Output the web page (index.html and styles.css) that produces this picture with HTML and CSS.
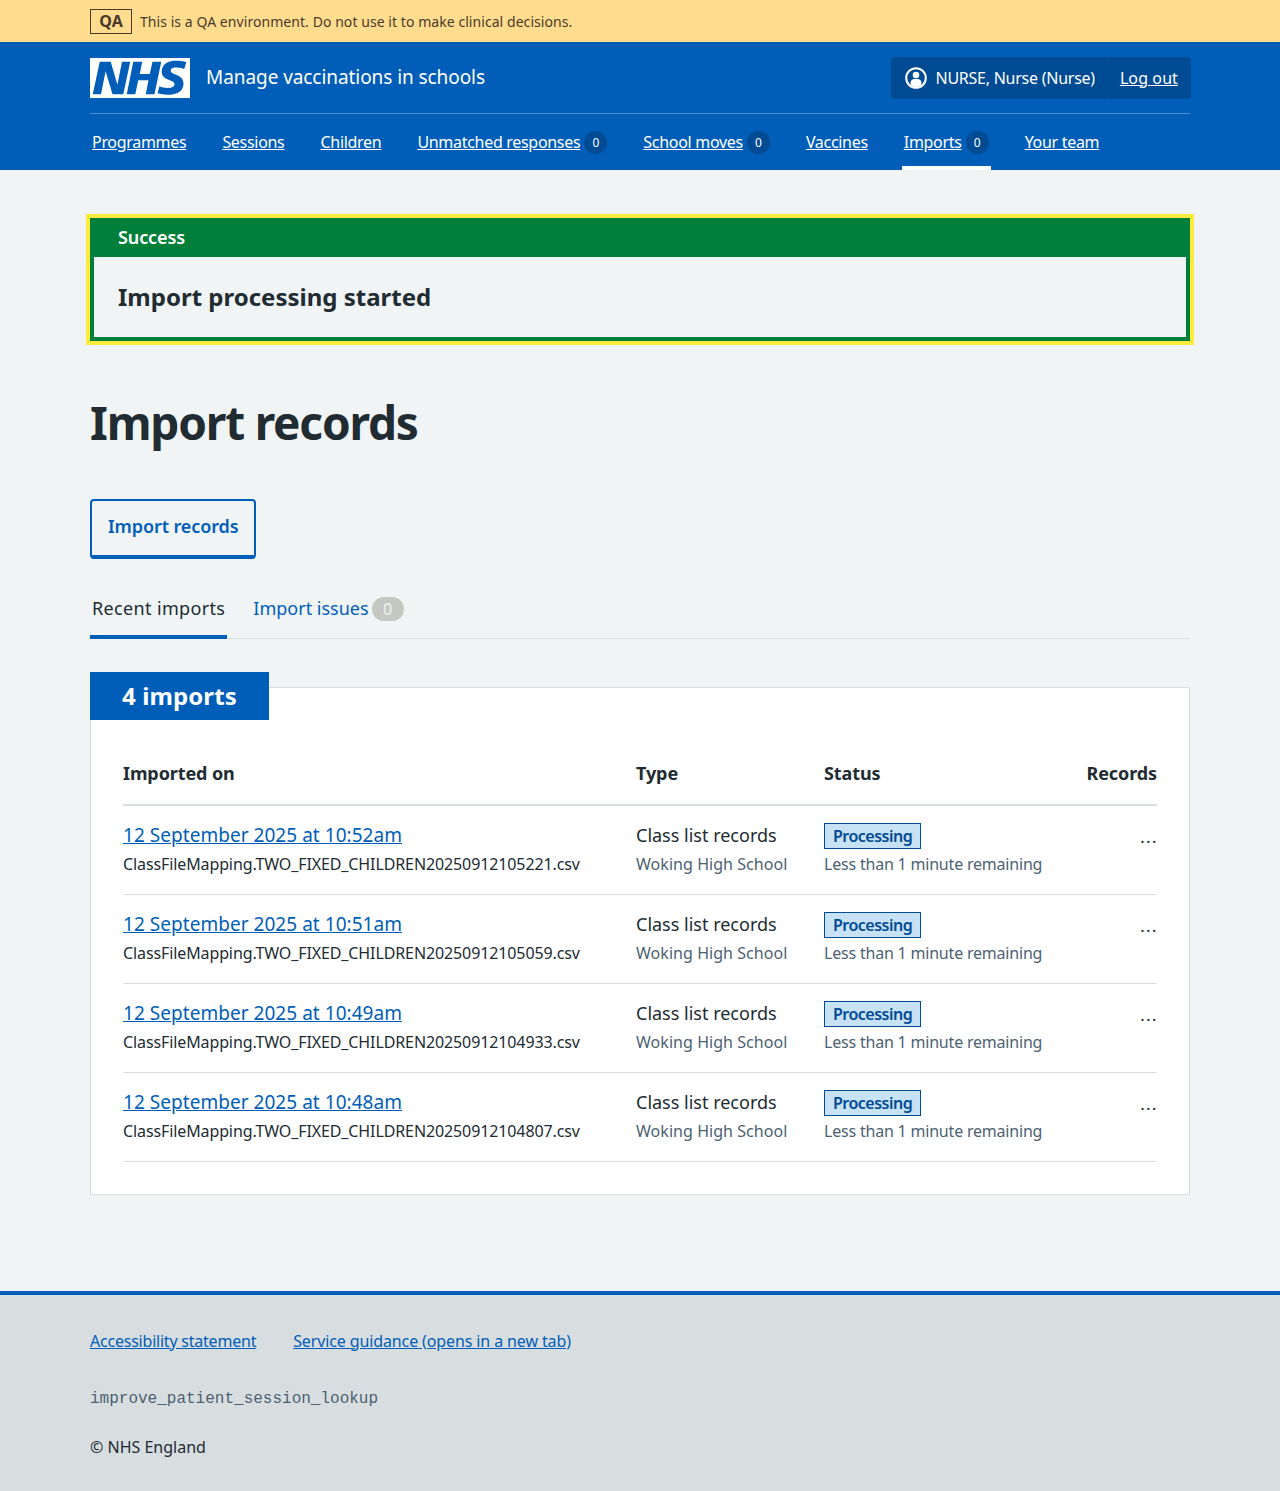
FILE: index.html
```html
<!DOCTYPE html>
<html lang="en">
<head>
    <meta charset="utf-8" />
    <title>Import records</title>
    <link rel="stylesheet" href="styles.css">
</head>
<body>
    <div class="env-bar">
        <div class="wrap env-inner">
            <strong class="env-tag">QA</strong>
            <span>This is a QA environment. Do not use it to make clinical decisions.</span>
        </div>
    </div>

    <header class="header">
        <div class="wrap">
            <div class="header-top">
                <a class="brand" href="#">
                    <svg class="logo" viewBox="0 0 40 16" aria-label="NHS">
                        <path fill="#fff" d="M0 0h40v16H0z"></path>
                        <path fill="#005eb8" d="M3.9 1.5h4.4l2.6 9h.1l1.8-9h3.3l-2.8 13H9l-2.7-9h-.1l-1.8 9H1.1M17.3 1.5h3.6l-1 4.9h4L25 1.5h3.5l-2.7 13h-3.5l1.1-5.6h-4.1l-1.2 5.6h-3.4M37.7 4.4c-.7-.3-1.6-.6-2.9-.6-1.4 0-2.5.2-2.5 1.3 0 1.8 5.1 1.2 5.1 5.1 0 3.6-3.3 4.5-6.4 4.5-1.3 0-2.9-.3-4-.7l.8-2.7c.7.4 2.1.7 3.2.7s2.8-.2 2.8-1.5c0-2.1-5.1-1.3-5.1-5 0-3.4 2.9-4.4 5.8-4.4 1.6 0 3.1.2 4 .6"></path>
                    </svg>
                    <span class="service">Manage vaccinations in schools</span>
                </a>
                <div class="account">
                    <span class="account-user">
                        <svg class="user-icon" viewBox="0 0 22 22">
                            <circle cx="11" cy="11" r="9.8" fill="none" stroke="#fff" stroke-width="2"></circle>
                            <circle cx="11" cy="8" r="3.3" fill="#fff"></circle>
                            <path fill="#fff" d="M5.5 18.2v-2.400c0-2.400 1.900-3.800 3.900-3.800h3.200c2 0 3.900 1.400 3.900 3.800v2.400c-1.500 1.100-3.400 1.800-5.500 1.800s-4-.7-5.500-1.800z"></path>
                        </svg>
                        NURSE, Nurse (Nurse)
                    </span>
                    <a class="account-link" href="#">Log out</a>
                </div>
            </div>
            <nav class="nav">
                <a class="nav-item" href="#"><span class="nav-text">Programmes</span></a>
                <a class="nav-item" href="#"><span class="nav-text">Sessions</span></a>
                <a class="nav-item" href="#"><span class="nav-text">Children</span></a>
                <a class="nav-item" href="#"><span class="nav-text">Unmatched responses</span><span class="count">0</span></a>
                <a class="nav-item" href="#"><span class="nav-text">School moves</span><span class="count">0</span></a>
                <a class="nav-item" href="#"><span class="nav-text">Vaccines</span></a>
                <a class="nav-item nav-item-active" href="#"><span class="nav-text">Imports</span><span class="count">0</span></a>
                <a class="nav-item" href="#"><span class="nav-text">Your team</span></a>
            </nav>
        </div>
    </header>

    <main class="wrap main">
        <div class="banner">
            <div class="banner-title">Success</div>
            <div class="banner-body">Import processing started</div>
        </div>

        <h1 class="page-title">Import records</h1>

        <a class="btn-secondary" href="#">Import records</a>

        <div class="tabs">
            <a class="tab tab-active" href="#">Recent imports</a>
            <a class="tab" href="#">Import issues<span class="tab-count">0</span></a>
        </div>

        <section class="card">
            <h2 class="card-heading">4 imports</h2>
            <table class="table">
                <thead>
                    <tr>
                        <th class="col-date">Imported on</th>
                        <th class="col-type">Type</th>
                        <th class="col-status">Status</th>
                        <th class="col-records">Records</th>
                    </tr>
                </thead>
                <tbody>
                    <tr>
                        <td><a class="row-link" href="#">12 September 2025 at 10:52am</a><div class="file">ClassFileMapping.TWO_FIXED_CHILDREN20250912105221.csv</div></td>
                        <td><div class="type">Class list records</div><div class="muted">Woking High School</div></td>
                        <td><span class="tag">Processing</span><div class="muted">Less than 1 minute remaining</div></td>
                        <td class="records">…</td>
                    </tr>
                    <tr>
                        <td><a class="row-link" href="#">12 September 2025 at 10:51am</a><div class="file">ClassFileMapping.TWO_FIXED_CHILDREN20250912105059.csv</div></td>
                        <td><div class="type">Class list records</div><div class="muted">Woking High School</div></td>
                        <td><span class="tag">Processing</span><div class="muted">Less than 1 minute remaining</div></td>
                        <td class="records">…</td>
                    </tr>
                    <tr>
                        <td><a class="row-link" href="#">12 September 2025 at 10:49am</a><div class="file">ClassFileMapping.TWO_FIXED_CHILDREN20250912104933.csv</div></td>
                        <td><div class="type">Class list records</div><div class="muted">Woking High School</div></td>
                        <td><span class="tag">Processing</span><div class="muted">Less than 1 minute remaining</div></td>
                        <td class="records">…</td>
                    </tr>
                    <tr>
                        <td><a class="row-link" href="#">12 September 2025 at 10:48am</a><div class="file">ClassFileMapping.TWO_FIXED_CHILDREN20250912104807.csv</div></td>
                        <td><div class="type">Class list records</div><div class="muted">Woking High School</div></td>
                        <td><span class="tag">Processing</span><div class="muted">Less than 1 minute remaining</div></td>
                        <td class="records">…</td>
                    </tr>
                </tbody>
            </table>
        </section>
    </main>

    <footer class="footer">
        <div class="wrap">
            <div class="footer-links">
                <a href="#">Accessibility statement</a>
                <a class="footer-guidance" href="#">Service guidance (opens in a new tab)</a>
            </div>
            <code class="branch">improve_patient_session_lookup</code>
            <p class="copyright">© NHS England</p>
        </div>
    </footer>
</body>
</html>
```

FILE: styles.css
```css
* {
    box-sizing: border-box;
}

body {
    margin: 0;
    background-color: #f0f4f5;
    color: #212b32;
    font-family: 'Noto Sans', sans-serif;
    font-size: 16px;
    line-height: 24px;
}

a {
    color: #005eb8;
}

.wrap {
    width: 1100px;
    margin: 0 auto;
}

/* environment bar */
.env-bar {
    height: 42px;
    background-color: #ffdc8e;
    color: #4a3a2a;
    font-size: 14px;
    letter-spacing: 0.06px;
}

.env-inner {
    display: flex;
    align-items: center;
    height: 42px;
    padding-top: 1px;
}

.env-tag {
    width: 42px;
    height: 25px;
    margin-right: 8px;
    border: 1px solid #4a3a2a;
    font-size: 16px;
    line-height: 23px;
    text-align: center;
}

/* header */
.header {
    height: 128px;
    background-color: #005eb8;
    color: #fff;
}

.header a {
    color: #fff;
}

.header-top {
    display: flex;
    justify-content: space-between;
    align-items: center;
    height: 72px;
    border-bottom: 1px solid #4c8ed0;
}

.brand {
    display: flex;
    align-items: center;
    text-decoration: none;
}

.logo {
    display: block;
    width: 100px;
    height: 40px;
}

.service {
    margin-left: 16px;
    padding-bottom: 2px;
    font-size: 19px;
    letter-spacing: -0.07px;
}

.account {
    display: flex;
    height: 42px;
    margin-right: -1px;
    background-color: #004b93;
    border-radius: 4px;
}

.account-user {
    display: flex;
    align-items: center;
    padding: 0 12px 0 14px;
    border-right: 1px solid #00509f;
    letter-spacing: -0.25px;
}

.user-icon {
    width: 22px;
    height: 22px;
    margin-right: 9px;
}

.account-link {
    padding: 9px 13px 9px 12px;
    letter-spacing: 0.1px;
}

.nav {
    display: flex;
    gap: 32px;
    height: 56px;
    letter-spacing: -0.3px;
}

.nav-item {
    display: flex;
    align-items: center;
    height: 56px;
    padding: 0 2px;
    text-decoration: none;
}

.nav-item-active {
    border-bottom: 4px solid #fff;
    padding-top: 4px;
}

.nav-text {
    text-decoration: underline;
}

.count {
    width: 23px;
    height: 23px;
    margin-left: 4px;
    border-radius: 50%;
    background-color: #004b93;
    font-size: 12px;
    letter-spacing: 0;
    line-height: 23px;
    text-align: center;
}

/* success banner */
.main {
    padding-top: 48px;
    padding-bottom: 96px;
}

.banner {
    border: 4px solid #007f3b;
    outline: 4px solid #ffeb3b;
}

.banner-title {
    height: 35px;
    padding: 3px 24px 0;
    background-color: #007f3b;
    color: #fff;
    font-size: 18px;
    font-weight: 600;
    letter-spacing: -0.1px;
}

.banner-body {
    padding: 24px;
    font-size: 24px;
    font-weight: 700;
    line-height: 32px;
}

.page-title {
    margin: 53px 0 49px;
    font-size: 46px;
    font-weight: 700;
    letter-spacing: -1.2px;
    line-height: 56px;
}

/* button */
.btn-secondary {
    display: inline-block;
    height: 60px;
    padding: 13px 16px;
    border: 2px solid #005eb8;
    border-bottom-width: 4px;
    border-radius: 4px;
    font-size: 18px;
    font-weight: 600;
    letter-spacing: -0.1px;
    text-decoration: none;
}

/* tabs */
.tabs {
    display: flex;
    gap: 24px;
    height: 56px;
    margin-top: 24px;
    border-bottom: 1px solid #d8dde0;
}

.tab {
    height: 56px;
    padding: 13px 2px 0;
    font-size: 18px;
    text-decoration: none;
}

.tab-active {
    border-bottom: 4px solid #005eb8;
    color: #212b32;
    letter-spacing: 0.35px;
}

.tab-count {
    display: inline-block;
    width: 32px;
    height: 24px;
    margin-left: 3px;
    border-radius: 12px;
    background-color: #c4c8c0;
    color: #f0f4f5;
    font-size: 16px;
    line-height: 24px;
    text-align: center;
    vertical-align: 0;
}

/* card */
.card {
    margin-top: 48px;
    padding: 0 32px 32px;
    background-color: #fff;
    border: 1px solid #d8dde0;
}

.card-heading {
    display: inline-block;
    height: 48px;
    margin: -16px 0 0 -33px;
    padding: 8px 32px;
    background-color: #005eb8;
    color: #fff;
    font-size: 24px;
    font-weight: 700;
    letter-spacing: 0.1px;
    line-height: 32px;
    vertical-align: top;
}

.table {
    width: 100%;
    margin-top: 30px;
    border-collapse: collapse;
    table-layout: fixed;
}

.table th {
    padding: 11px 0 19px;
    border-bottom: 2px solid #d8dde0;
    font-size: 18px;
    font-weight: 700;
    letter-spacing: -0.1px;
    text-align: left;
}

.table td {
    height: 89px;
    padding: 17px 0 0;
    border-bottom: 1px solid #d8dde0;
    vertical-align: top;
}

.col-date {
    width: 513px;
}

.col-type {
    width: 188px;
}

.col-status {
    width: 230px;
}

.table .col-records {
    text-align: right;
}

.row-link {
    font-size: 19px;
    letter-spacing: 0.04px;
}

.file {
    margin-top: 4px;
    letter-spacing: -0.11px;
}

.type {
    font-size: 18px;
}

.muted {
    margin-top: 5px;
    color: #4c6272;
    letter-spacing: 0.05px;
}

.tag {
    display: inline-block;
    height: 26px;
    padding: 0 8px;
    border: 1px solid #004b93;
    background-color: #c7e1f5;
    color: #004b93;
    font-weight: 600;
    letter-spacing: -0.5px;
    line-height: 24px;
}

.tag + .muted {
    margin-top: 3px;
    letter-spacing: -0.2px;
}

.table .records {
    padding-top: 16px;
    font-size: 24px;
    font-weight: 300;
    text-align: right;
}

/* footer */
.footer {
    height: 200px;
    border-top: 4px solid #005eb8;
    background-color: #d8dde0;
    padding-top: 34px;
}

.footer-links {
    display: flex;
    gap: 37px;
    letter-spacing: -0.22px;
}

.footer-guidance {
    letter-spacing: -0.12px;
}

.branch {
    display: block;
    margin-top: 34px;
    color: #4c6272;
    font-family: 'Liberation Mono', monospace;
    font-size: 16px;
}

.copyright {
    margin: 24px 0 0;
}
```
